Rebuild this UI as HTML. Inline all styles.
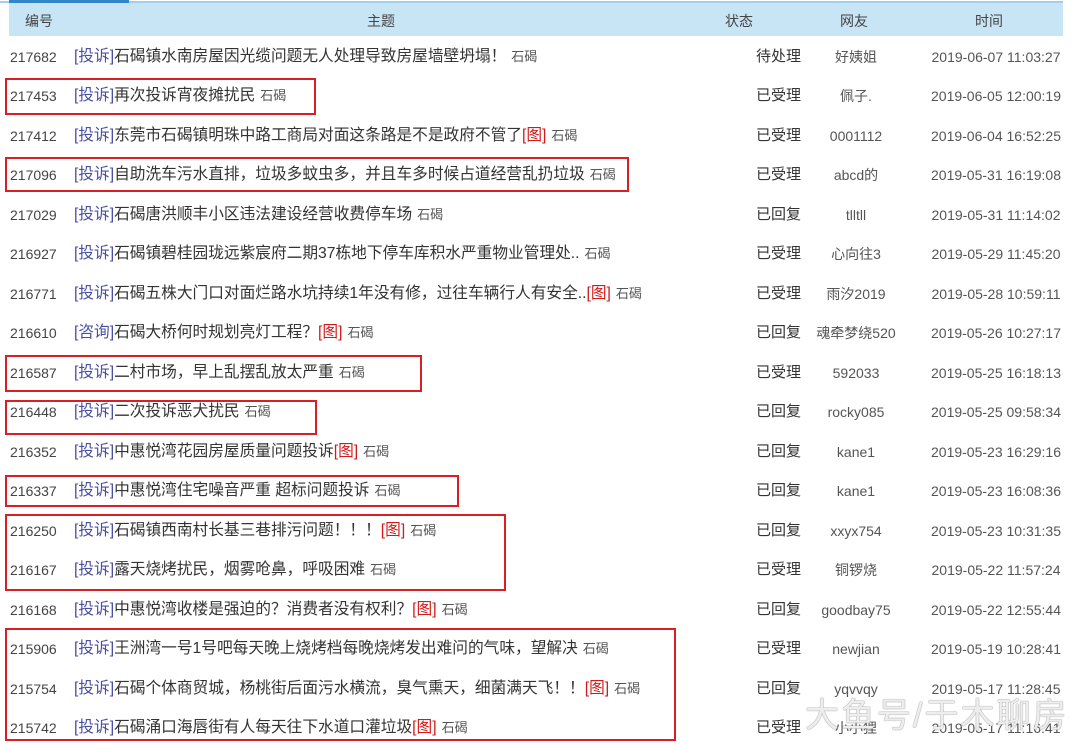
<!DOCTYPE html>
<html><head><meta charset="utf-8"><style>
*{margin:0;padding:0;box-sizing:border-box}
body{width:1080px;height:746px;background:#fff;position:relative;overflow:hidden;font-family:"Liberation Sans","Noto Sans CJK SC",sans-serif;color:#444}
.topline{position:absolute;left:0;top:1px;width:1063px;height:2px;background:#9fd0ee}
.tab{position:absolute;left:9px;top:0;width:120px;height:3px;background:#2f86c8}
.hdr{position:absolute;left:9px;top:3px;width:1054px;height:33px;background:#c8e5f6;font-size:14px;color:#444}
.hdr span{position:absolute;top:8px}
.row{position:absolute;left:0;width:1080px;height:24px;line-height:22px}
.id{position:absolute;left:10px;color:#444;font-size:14px}
.sub{position:absolute;left:74px;color:#333;font-size:15.7px;white-space:nowrap}
.sub b{font-weight:normal;color:#4a4fa0}
.sub i{font-style:normal;color:#d31a1a}
.sub small{font-size:13px;color:#555;margin-left:5px}
.st{position:absolute;left:756px;color:#333;font-size:15px}
.u{position:absolute;left:796px;width:120px;text-align:center;color:#555;font-size:14px}
.t{position:absolute;left:926px;width:140px;text-align:center;color:#555;font-size:14px}
.box{position:absolute;border:2px solid #d91e25}
.wm{position:absolute;left:805px;top:688px;font-size:34px;color:rgba(255,255,255,0.85);text-shadow:0 0 1px #888,0 0 1px #888;letter-spacing:2px;white-space:nowrap}
</style></head><body>
<div class="topline"></div><div class="tab"></div>
<div class="hdr"><span style="left:16px">编号</span><span style="left:358px">主题</span><span style="left:716px">状态</span><span style="left:831px">网友</span><span style="left:966px">时间</span></div>

<div class="row" style="top:46px"><span class="id">217682</span><span class="sub"><b>[投诉]</b>石碣镇水南房屋因光缆问题无人处理导致房屋墙壁坍塌！<small>石碣</small></span><span class="st">待处理</span><span class="u">好姨姐</span><span class="t">2019-06-07 11:03:27</span></div>
<div class="row" style="top:85px"><span class="id">217453</span><span class="sub"><b>[投诉]</b>再次投诉宵夜摊扰民<small>石碣</small></span><span class="st">已受理</span><span class="u">佩子.</span><span class="t">2019-06-05 12:00:19</span></div>
<div class="row" style="top:125px"><span class="id">217412</span><span class="sub"><b>[投诉]</b>东莞市石碣镇明珠中路工商局对面这条路是不是政府不管了<i>[图]</i><small>石碣</small></span><span class="st">已受理</span><span class="u">0001112</span><span class="t">2019-06-04 16:52:25</span></div>
<div class="row" style="top:164px"><span class="id">217096</span><span class="sub"><b>[投诉]</b>自助洗车污水直排，垃圾多蚊虫多，并且车多时候占道经营乱扔垃圾<small>石碣</small></span><span class="st">已受理</span><span class="u">abcd的</span><span class="t">2019-05-31 16:19:08</span></div>
<div class="row" style="top:204px"><span class="id">217029</span><span class="sub"><b>[投诉]</b>石碣唐洪顺丰小区违法建设经营收费停车场<small>石碣</small></span><span class="st">已回复</span><span class="u">tlltll</span><span class="t">2019-05-31 11:14:02</span></div>
<div class="row" style="top:243px"><span class="id">216927</span><span class="sub"><b>[投诉]</b>石碣镇碧桂园珑远紫宸府二期37栋地下停车库积水严重物业管理处..<small>石碣</small></span><span class="st">已受理</span><span class="u">心向往3</span><span class="t">2019-05-29 11:45:20</span></div>
<div class="row" style="top:283px"><span class="id">216771</span><span class="sub"><b>[投诉]</b>石碣五株大门口对面烂路水坑持续1年没有修，过往车辆行人有安全..<i>[图]</i><small>石碣</small></span><span class="st">已受理</span><span class="u">雨汐2019</span><span class="t">2019-05-28 10:59:11</span></div>
<div class="row" style="top:322px"><span class="id">216610</span><span class="sub"><b>[咨询]</b>石碣大桥何时规划亮灯工程？<i>[图]</i><small>石碣</small></span><span class="st">已回复</span><span class="u">魂牵梦绕520</span><span class="t">2019-05-26 10:27:17</span></div>
<div class="row" style="top:362px"><span class="id">216587</span><span class="sub"><b>[投诉]</b>二村市场，早上乱摆乱放太严重<small>石碣</small></span><span class="st">已受理</span><span class="u">592033</span><span class="t">2019-05-25 16:18:13</span></div>
<div class="row" style="top:401px"><span class="id">216448</span><span class="sub"><b>[投诉]</b>二次投诉恶犬扰民<small>石碣</small></span><span class="st">已回复</span><span class="u">rocky085</span><span class="t">2019-05-25 09:58:34</span></div>
<div class="row" style="top:441px"><span class="id">216352</span><span class="sub"><b>[投诉]</b>中惠悦湾花园房屋质量问题投诉<i>[图]</i><small>石碣</small></span><span class="st">已回复</span><span class="u">kane1</span><span class="t">2019-05-23 16:29:16</span></div>
<div class="row" style="top:480px"><span class="id">216337</span><span class="sub"><b>[投诉]</b>中惠悦湾住宅噪音严重 超标问题投诉<small>石碣</small></span><span class="st">已回复</span><span class="u">kane1</span><span class="t">2019-05-23 16:08:36</span></div>
<div class="row" style="top:520px"><span class="id">216250</span><span class="sub"><b>[投诉]</b>石碣镇西南村长基三巷排污问题！！！<i>[图]</i><small>石碣</small></span><span class="st">已回复</span><span class="u">xxyx754</span><span class="t">2019-05-23 10:31:35</span></div>
<div class="row" style="top:559px"><span class="id">216167</span><span class="sub"><b>[投诉]</b>露天烧烤扰民，烟雾呛鼻，呼吸困难<small>石碣</small></span><span class="st">已受理</span><span class="u">铜锣烧</span><span class="t">2019-05-22 11:57:24</span></div>
<div class="row" style="top:599px"><span class="id">216168</span><span class="sub"><b>[投诉]</b>中惠悦湾收楼是强迫的？消费者没有权利？<i>[图]</i><small>石碣</small></span><span class="st">已回复</span><span class="u">goodbay75</span><span class="t">2019-05-22 12:55:44</span></div>
<div class="row" style="top:638px"><span class="id">215906</span><span class="sub"><b>[投诉]</b>王洲湾一号1号吧每天晚上烧烤档每晚烧烤发出难问的气味，望解决<small>石碣</small></span><span class="st">已受理</span><span class="u">newjian</span><span class="t">2019-05-19 10:28:41</span></div>
<div class="row" style="top:678px"><span class="id">215754</span><span class="sub"><b>[投诉]</b>石碣个体商贸城，杨桃街后面污水横流，臭气熏天，细菌满天飞！！<i>[图]</i><small>石碣</small></span><span class="st">已回复</span><span class="u">yqvvqy</span><span class="t">2019-05-17 11:28:45</span></div>
<div class="row" style="top:717px"><span class="id">215742</span><span class="sub"><b>[投诉]</b>石碣涌口海唇街有人每天往下水道口灌垃圾<i>[图]</i><small>石碣</small></span><span class="st">已受理</span><span class="u">小小狸</span><span class="t">2019-05-17 11:16:41</span></div>

<div class="box" style="left:5px;top:78px;width:311px;height:37px"></div>
<div class="box" style="left:5px;top:157px;width:624px;height:35px"></div>
<div class="box" style="left:5px;top:355px;width:417px;height:37px"></div>
<div class="box" style="left:5px;top:400px;width:312px;height:35px"></div>
<div class="box" style="left:5px;top:475px;width:454px;height:32px"></div>
<div class="box" style="left:5px;top:514px;width:501px;height:77px"></div>
<div class="box" style="left:5px;top:628px;width:671px;height:113px"></div>
<div class="wm">大鱼号/于木聊房</div>
</body></html>
